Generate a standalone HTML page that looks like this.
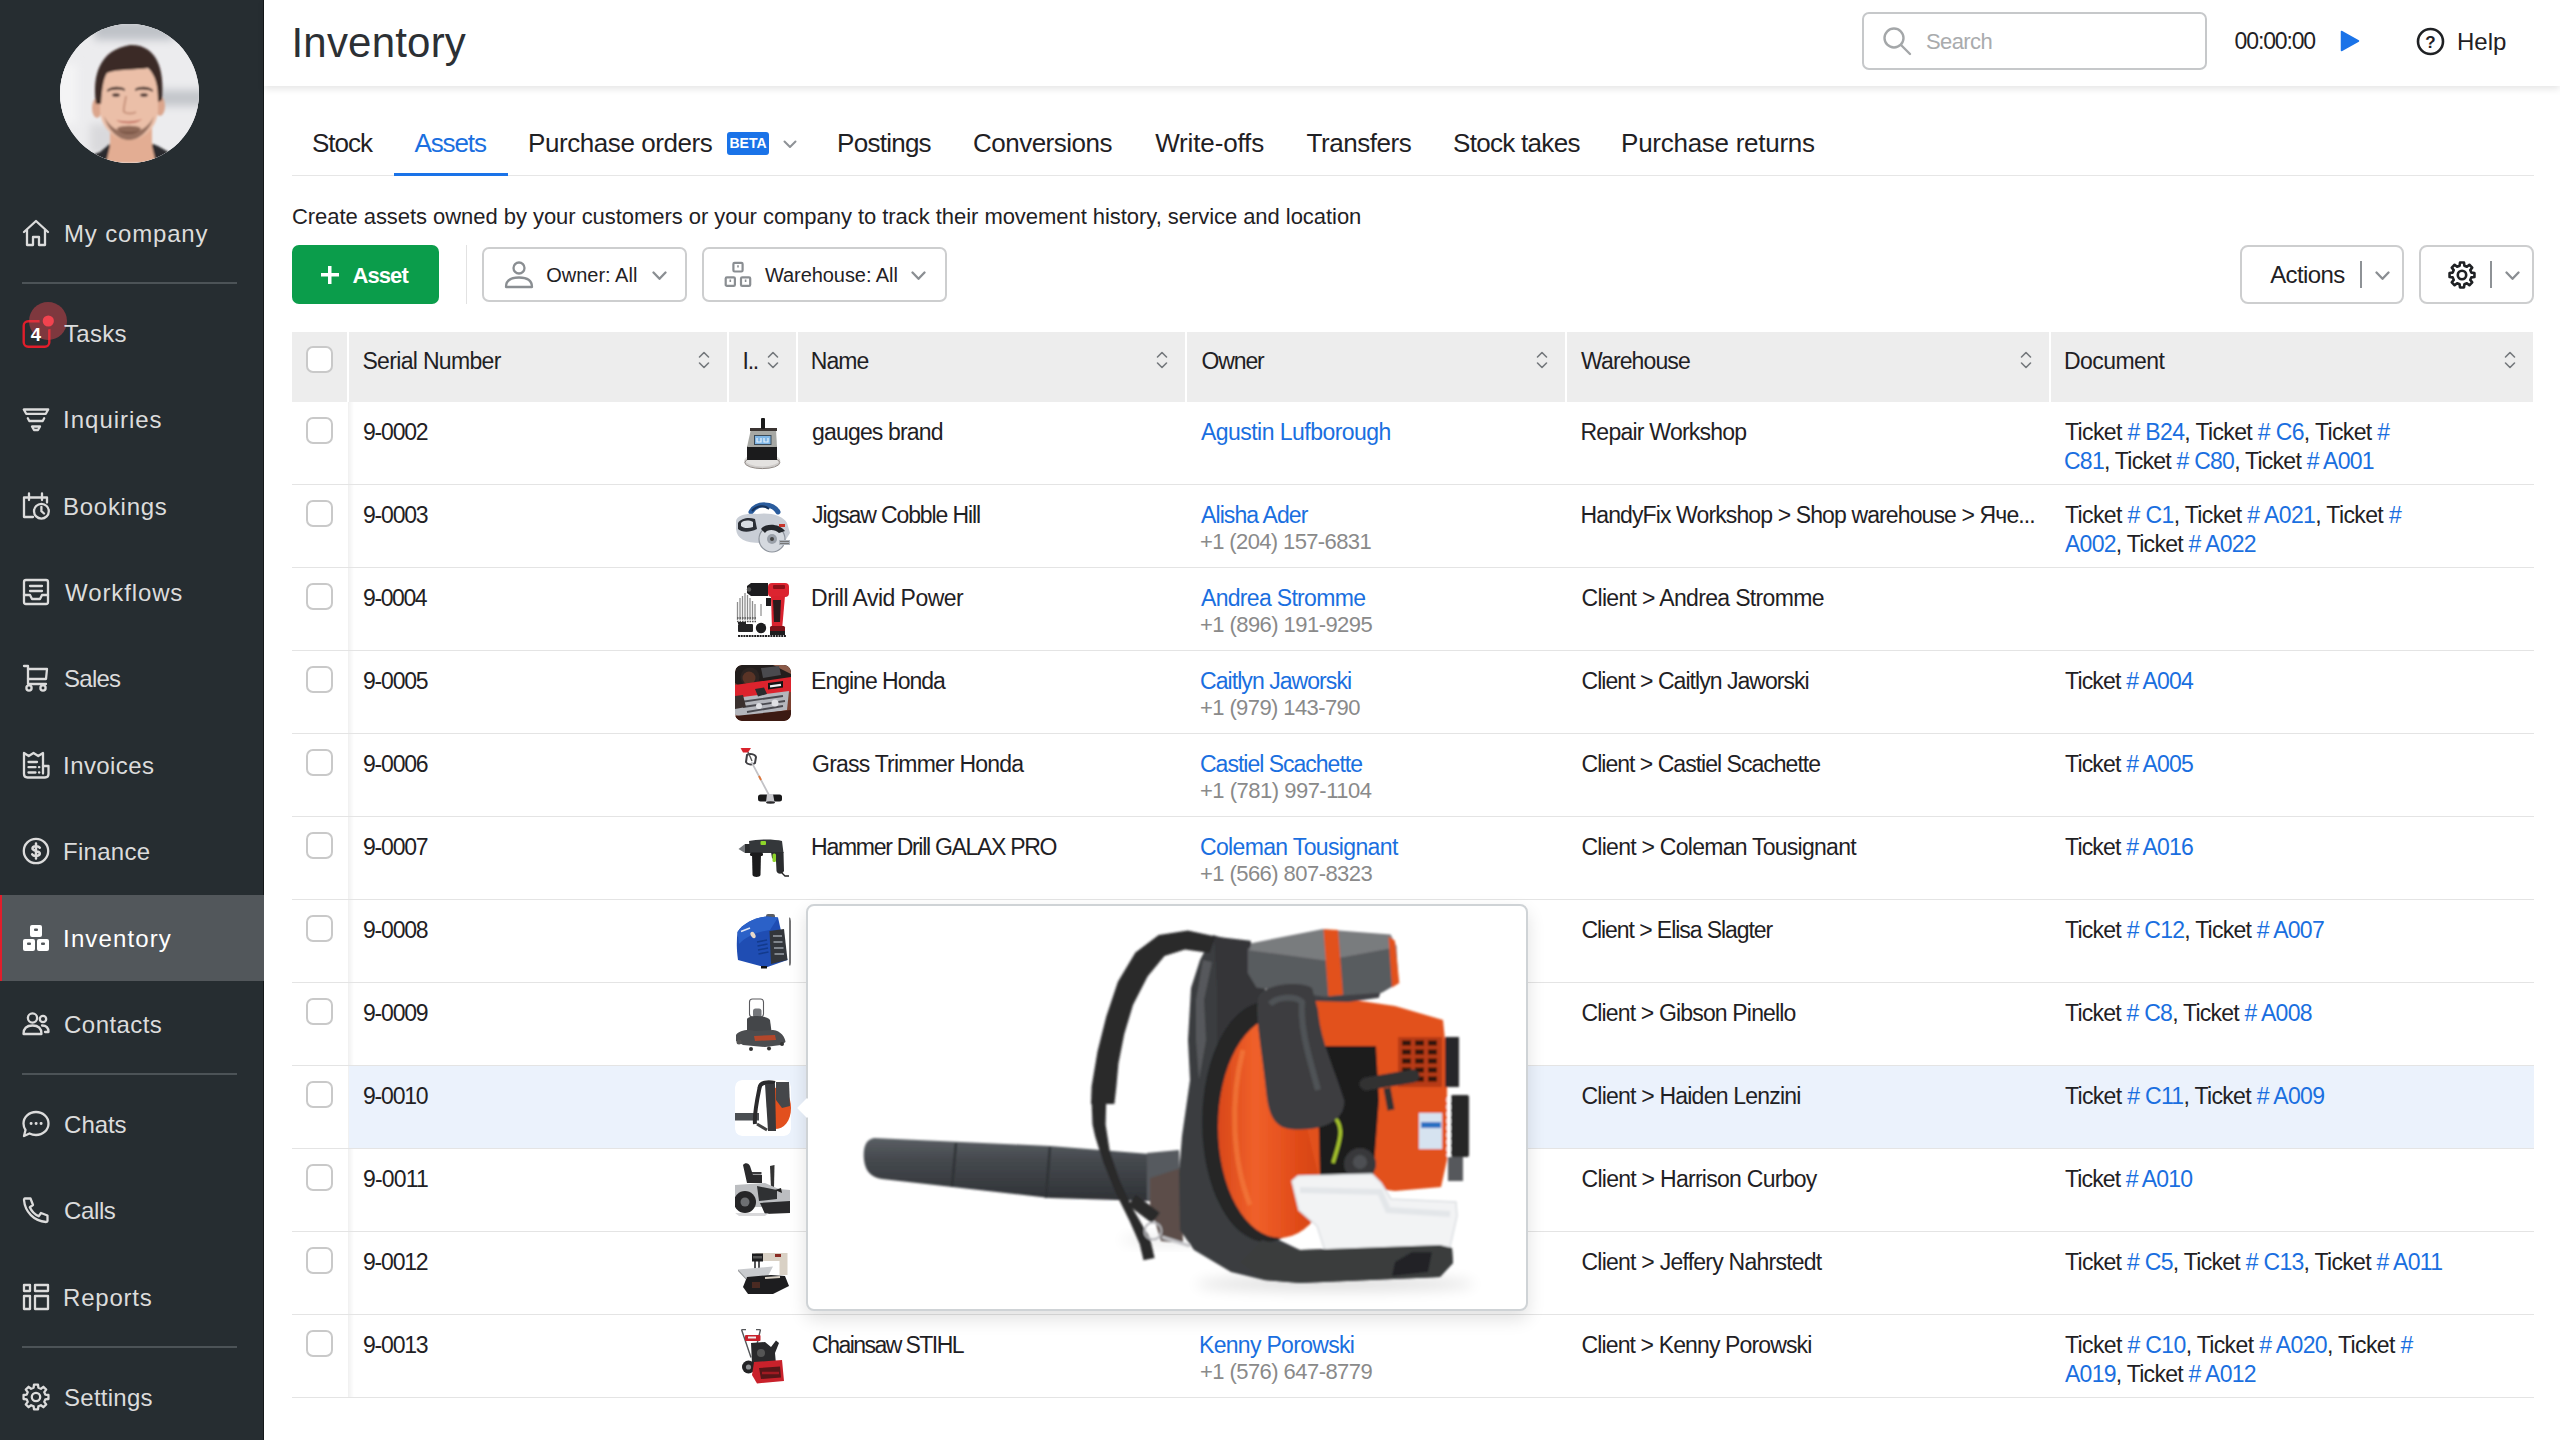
<!DOCTYPE html>
<html lang="en"><head><meta charset="utf-8"><title>Inventory - Assets</title>
<style>
*{box-sizing:border-box;margin:0;padding:0}
html,body{width:2560px;height:1440px;overflow:hidden;background:#fff}
body{font-family:"Liberation Sans",sans-serif;color:#1f2124;position:relative;font-size:22px}
a{color:#1a6fe0;text-decoration:none}
svg{display:block}
/* sidebar */
.side{position:absolute;left:0;top:0;width:264px;height:1440px;background:#262d31;box-shadow:inset -1px 0 0 #14181a}
.avatar{position:absolute;left:60px;top:24px;width:139px;height:139px;border-radius:50%;overflow:hidden;background:#e9e9eb}
.active-bg{position:absolute;left:0;top:895px;width:264px;height:86px;background:#52575b;border-left:2px solid #e01e2b}
.sdiv{position:absolute;left:22px;width:215px;height:2px;background:#4c5357}
.mi{position:absolute;left:0;width:264px;height:44px;color:#dcdcdc;font-size:24px;line-height:44px}
.mi.act{color:#fff}
.mic{position:absolute;left:22px;top:8px;width:28px;height:28px}
.mt{position:absolute;left:64px;top:1px;white-space:nowrap}
/* header */
.hdr{position:absolute;left:264px;top:0;width:2296px;height:86px;background:#fff;box-shadow:0 3px 7px rgba(0,0,0,.10)}
.title{position:absolute;left:29px;top:15px;font-size:42px;line-height:56px;color:#2c3034;white-space:nowrap;font-weight:400}
.search{position:absolute;left:1598px;top:12px;width:345px;height:58px;border:2px solid #c6c8ca;border-radius:7px}
.search svg{position:absolute;left:18px;top:12px}
.search span{position:absolute;left:63px;top:13px;font-size:22px;line-height:30px;color:#a9abad}
.timer{position:absolute;left:1970px;top:26px;font-size:23px;line-height:30px;white-space:nowrap}
.play{position:absolute;left:2076px;top:30px}
.helpic{position:absolute;left:2152px;top:27px}
.help{position:absolute;left:2194px;top:26px;font-size:24px;line-height:32px}
/* tabs */
.tabline{position:absolute;left:292px;top:175px;width:2242px;height:1px;background:#e6e6e6}
.tabul{position:absolute;left:394px;top:173px;width:114px;height:3px;background:#1a73e8}
.tab{position:absolute;top:126px;font-size:26px;line-height:34px;white-space:nowrap;color:#1f2124}
.tab.on{color:#1a6fe0}
.beta{position:absolute;left:727px;top:132px;width:42px;height:23px;background:#1a73e8;border-radius:3px;color:#fff;font-size:14px;font-weight:bold;line-height:23px;text-align:center}
.tabchev{position:absolute;left:783px;top:140px}
/* toolbar */
.desc{position:absolute;left:292px;top:203px;font-size:22px;line-height:28px;white-space:nowrap}
.btn-asset{position:absolute;left:292px;top:245px;width:147px;height:59px;background:#0b9d4b;border-radius:7px;color:#fff;font-weight:bold;font-size:22px;line-height:61px}
.btn-asset .plus{position:absolute;left:29px;top:21px;width:18px;height:18px;background:linear-gradient(#fff,#fff) center/18px 3.5px no-repeat,linear-gradient(#fff,#fff) center/3.5px 18px no-repeat}
.btn-asset #t-asset{position:absolute;left:60px;top:0}
.vdiv{position:absolute;left:466px;top:245px;width:1px;height:59px;background:#e2e2e2}
.fbtn{position:absolute;top:247px;height:55px;border:2px solid #cdcecf;border-radius:7px;background:#fff}
.fbtn svg.ic{position:absolute;left:20px;top:11px}
.ft{position:absolute;top:11px;font-size:20px;line-height:30px;white-space:nowrap}
.fchev{position:absolute;top:22px}
.abtn{position:absolute;top:245px;height:59px;border:2px solid #cdcecf;border-radius:8px;background:#fff}
.at{position:absolute;left:28px;top:12px;font-size:24px;line-height:32px}
.asep{position:absolute;top:14px;width:2px;height:27px;background:#8e9296}
.achev{position:absolute;top:24px}
.gear{position:absolute;left:27px;top:14px}
/* table */
.thead{position:absolute;left:0;top:332px;height:70px;width:2560px}
.th{position:absolute;top:0;height:70px;background:#ededed}
.thl{position:absolute;left:14px;top:15px;font-size:23px;line-height:28px;white-space:nowrap}
.sort{position:absolute;right:17px;top:18.500px}
.cb{position:absolute;width:27px;height:27px;border:2px solid #c9c9c9;border-radius:7px;background:#fff}
.colshadow{position:absolute;left:348px;top:402px;width:6px;height:996px;background:linear-gradient(90deg,rgba(0,0,0,.06),rgba(0,0,0,0))}
.tr{position:absolute;left:292px;width:2242px;height:83px;border-bottom:1px solid #e4e4e4}
.tr.hl::before{content:"";position:absolute;left:57px;right:0;top:0;bottom:0;background:#ebf2fc}
.c{position:absolute;top:16px;font-size:23px;line-height:28px;white-space:nowrap}
.ph{top:43px;color:#8a8a8a;font-size:22px}
.doc{top:14px;line-height:29px}
.thumb{position:absolute;left:443px;top:14px;width:56px;height:56px;border-radius:7px;overflow:hidden}
/* popup */
.pop{position:absolute;left:806px;top:904px;width:722px;height:407px;background:#fff;border:2px solid #cfd3d6;border-radius:8px;box-shadow:0 8px 18px rgba(0,0,0,.12)}
.pop .arrow{position:absolute;left:-8px;top:195px;width:14px;height:14px;background:#fff;transform:rotate(45deg)}
.pop svg{position:absolute;left:0;top:0}

</style></head><body>
<div class="side"><div class="avatar"><svg width="139" height="139" viewBox="0 0 139 139"><defs><filter id="ab" x="-10%" y="-10%" width="120%" height="120%"><feGaussianBlur stdDeviation="4"/></filter><filter id="af" x="-5%" y="-5%" width="110%" height="110%"><feGaussianBlur stdDeviation=".8"/></filter></defs>
<rect width="139" height="139" fill="#ececee"/>
<g filter="url(#ab)"><rect x="34" y="-4" width="80" height="20" fill="#bfc2c8"/><rect x="96" y="66" width="50" height="16" fill="#c3c6cb"/><rect x="30" y="100" width="26" height="30" fill="#d9d9dc"/><rect x="-5" y="40" width="22" height="60" fill="#f4f4f5"/></g>
<g filter="url(#af)">
<path d="M12 139 L40 128 L52 118 H88 L98 122 L128 139 Z" fill="#2b2b2d"/>
<path d="M50 100 H92 V122 L96 139 H46 L50 122 Z" fill="#e3ad93"/>
<ellipse cx="37" cy="84" rx="5" ry="10" fill="#dba58c"/><ellipse cx="100" cy="82" rx="5" ry="10" fill="#dba58c"/>
<path d="M40 60 C40 34 96 32 98 60 L98 88 C96 104 84 116 69 116 C54 116 42 104 40 88 Z" fill="#ebbfa8"/>
<path d="M44 92 C48 106 58 116 69 116 C80 116 90 106 94 92 C88 104 80 108 69 108 C58 108 50 104 44 92 Z" fill="#7a5545" opacity=".75"/>
<path d="M57 104 C62 101 76 101 81 104 C78 112 60 112 57 104 Z" fill="#6b4638" opacity=".7"/>
<path d="M56 96 C62 98 76 98 82 95 C78 100 62 101 56 96 Z" fill="#c0695a"/>
<path d="M47 66 C52 62 60 62 65 65 L65 67 C60 65 52 65 47 68 Z" fill="#3b2a26"/><path d="M75 65 C80 62 88 62 93 66 L93 68 C88 65 80 65 75 67 Z" fill="#3b2a26"/>
<ellipse cx="56" cy="71" rx="4" ry="1.800" fill="#4a3630"/><ellipse cx="84" cy="71" rx="4" ry="1.800" fill="#4a3630"/>
<path d="M66 72 C65 80 63 84 64 88 C67 90 73 90 76 88" fill="none" stroke="#c8937c" stroke-width="2"/>
<path d="M36 80 C32 50 40 26 70 21 C96 20 105 44 102 76 L98 78 C98 62 96 52 88 44 C76 46 56 45 47 49 C43 56 42 66 41 80 Z" fill="#3a2925"/>
</g></svg></div><div class="active-bg"></div><div class="sdiv" style="top:282px"></div><div class="sdiv" style="top:1073px"></div><div class="sdiv" style="top:1346px"></div><div class="mi" style="top:211px"><span class="mic"><svg width="28" height="28" viewBox="0 0 28 28" fill="none" stroke="#dcdcdc" stroke-width="2.3" stroke-linecap="round" stroke-linejoin="round" ><path d="M2 13 L14 2 L26 13"/><path d="M5 11 V26 H11 V18 H17 V26 H23 V11"/></svg></span><span class="mt" id="m-home" style="letter-spacing:0.833px;margin-left:0.00px">My company</span></div><div class="mi" style="top:311px"><span class="mic"><svg width="60" height="60" viewBox="0 0 60 60" style="position:absolute;left:-16px;top:-15px;overflow:visible"><rect x="17.700" y="17.200" width="25.600" height="25.600" rx="4.500" fill="none" stroke="#e01e2b" stroke-width="2.400"/><circle cx="42" cy="17" r="8.500" fill="#262d31"/><circle cx="42" cy="17" r="19" fill="#e0454d" fill-opacity=".48"/><text x="30" y="36.500" font-family="Liberation Sans,sans-serif" font-size="18.500" font-weight="bold" fill="#fff" text-anchor="middle">4</text><circle cx="42.300" cy="17" r="5.600" fill="#f2434f"/></svg></span><span class="mt" id="m-tasks" style="letter-spacing:0.300px;margin-left:0.00px">Tasks</span></div><div class="mi" style="top:397px"><span class="mic"><svg width="28" height="28" viewBox="0 0 28 28" fill="none" stroke="#dcdcdc" stroke-width="2.3" stroke-linecap="round" stroke-linejoin="round" ><path d="M1.800 4.500 H26.200 L23.800 8.800 H4.200 Z"/><path d="M5.800 13.300 L7.300 16 H20.700 L22.200 13.300"/><path d="M10 21.500 H18 L16 25 H12 Z"/></svg></span><span class="mt" id="m-inquiries" style="letter-spacing:0.975px;margin-left:-0.90px">Inquiries</span></div><div class="mi" style="top:484px"><span class="mic"><svg width="28" height="28" viewBox="0 0 28 28" fill="none" stroke="#dcdcdc" stroke-width="2.3" stroke-linecap="round" stroke-linejoin="round" ><path d="M11 25 H2 V5.500 H25 V10.500"/><path d="M7 1.500 V8 M20 1.500 V8"/><circle cx="19.400" cy="19.200" r="7.400"/><path d="M19.400 15 V19.200 L22 21.500"/></svg></span><span class="mt" id="m-bookings" style="letter-spacing:0.698px;margin-left:-0.90px">Bookings</span></div><div class="mi" style="top:570px"><span class="mic"><svg width="28" height="28" viewBox="0 0 28 28" fill="none" stroke="#dcdcdc" stroke-width="2.3" stroke-linecap="round" stroke-linejoin="round" ><rect x="2" y="2" width="24" height="24" rx="2"/><path d="M8 8 H20 M8 13 H20"/><path d="M2 17 H8 L10 21 H18 L20 17 H26"/></svg></span><span class="mt" id="m-workflows" style="letter-spacing:0.879px;margin-left:1.10px">Workflows</span></div><div class="mi" style="top:656px"><span class="mic"><svg width="28" height="28" viewBox="0 0 28 28" fill="none" stroke="#dcdcdc" stroke-width="2.3" stroke-linecap="round" stroke-linejoin="round" ><path d="M2 2 H6 V20 H24"/><path d="M6 5 H25 L24 15 H6"/><circle cx="7" cy="24" r="2.6"/><circle cx="21" cy="24" r="2.6"/></svg></span><span class="mt" id="m-sales" style="letter-spacing:-0.775px;margin-left:0.10px">Sales</span></div><div class="mi" style="top:743px"><span class="mic"><svg width="28" height="28" viewBox="0 0 28 28" fill="none" stroke="#dcdcdc" stroke-width="2.3" stroke-linecap="round" stroke-linejoin="round" ><path d="M2 2 L6.750 5 L11.500 2 L16.250 5 L21 2 V15 H26.500 V23 Q26.500 26.500 23 26.500 H5.500 Q2 26.500 2 23 Z"/><path d="M21 15 V22.500"/><path d="M6.500 11 H15 M6.500 16.200 H13.500 M6.500 21.500 H13.500 M17 16.200 h.3 M17 21.500 h.3"/></svg></span><span class="mt" id="m-invoices" style="letter-spacing:0.413px;margin-left:-0.90px">Invoices</span></div><div class="mi" style="top:829px"><span class="mic"><svg width="28" height="28" viewBox="0 0 28 28" fill="none" stroke="#dcdcdc" stroke-width="2.3" stroke-linecap="round" stroke-linejoin="round" ><circle cx="14" cy="14" r="12.200"/><path d="M17.800 10.800 C16.500 8.800 10.500 8.600 10.500 11.600 C10.500 14.600 17.800 13.400 17.800 16.600 C17.800 19.600 11.500 19.600 10.200 17.400 M14 6.500 V21.500" stroke-width="2.500"/></svg></span><span class="mt" id="m-finance" style="letter-spacing:0.251px;margin-left:-0.90px">Finance</span></div><div class="mi act" style="top:916px"><span class="mic"><svg width="28" height="28" viewBox="0 0 28 28"><rect x="8" y="1" width="12" height="12" rx="2" fill="#fff"/><rect x="1" y="15" width="12" height="12" rx="2" fill="#fff"/><rect x="15" y="15" width="12" height="12" rx="2" fill="#fff"/><rect x="12" y="4.5" width="4" height="2.6" rx="1" fill="#52575b"/><rect x="5" y="18.5" width="4" height="2.6" rx="1" fill="#52575b"/><rect x="19" y="18.5" width="4" height="2.6" rx="1" fill="#52575b"/></svg></span><span class="mt" id="m-inventory" style="letter-spacing:1.121px;margin-left:-0.90px">Inventory</span></div><div class="mi" style="top:1002px"><span class="mic"><svg width="28" height="28" viewBox="0 0 28 28" fill="none" stroke="#dcdcdc" stroke-width="2.3" stroke-linecap="round" stroke-linejoin="round" ><circle cx="10.5" cy="8" r="4.6"/><path d="M1.5 24 C1.5 17 6 15.5 10.5 15.5 C15 15.5 19.5 17 19.5 24 Z"/><circle cx="21" cy="9" r="3.2"/><path d="M20 15.5 C24 15.5 26.5 17 26.5 22 H23"/></svg></span><span class="mt" id="m-contacts" style="letter-spacing:0.428px;margin-left:0.10px">Contacts</span></div><div class="mi" style="top:1102px"><span class="mic"><svg width="28" height="28" viewBox="0 0 28 28" fill="none" stroke="#dcdcdc" stroke-width="2.3" stroke-linecap="round" stroke-linejoin="round" ><path d="M14 2 C21 2 26.5 7 26.5 13.5 C26.5 20 21 25 14 25 C11.5 25 9.5 24.5 7.5 23.5 L2 26 L3.5 20 C2.2 18 1.5 16 1.5 13.5 C1.5 7 7 2 14 2 Z"/><path d="M9 13.5 h.2 M14 13.5 h.2 M19 13.5 h.2" stroke-width="2.8"/></svg></span><span class="mt" id="m-chats" style="letter-spacing:-0.050px;margin-left:0.10px">Chats</span></div><div class="mi" style="top:1188px"><span class="mic"><svg width="28" height="28" viewBox="0 0 28 28" fill="none" stroke="#dcdcdc" stroke-width="2.3" stroke-linecap="round" stroke-linejoin="round" ><path d="M3 2.5 H8.5 L11 9 L7.8 11.2 C9.5 15 13 18.5 16.8 20.2 L19 17 L25.5 19.5 V25 C25.5 25.8 24.8 26 24 26 C12 25 3 16 2 4 C2 3.2 2.2 2.5 3 2.5 Z"/></svg></span><span class="mt" id="m-calls" style="letter-spacing:-0.400px;margin-left:0.10px">Calls</span></div><div class="mi" style="top:1275px"><span class="mic"><svg width="28" height="28" viewBox="0 0 28 28" fill="none" stroke="#dcdcdc" stroke-width="2.3" stroke-linecap="round" stroke-linejoin="round" stroke-linejoin="miter"><rect x="2" y="2" width="6" height="6"/><rect x="13" y="2" width="13" height="6"/><rect x="2" y="13" width="6" height="13"/><rect x="13" y="13" width="13" height="13"/></svg></span><span class="mt" id="m-reports" style="letter-spacing:0.751px;margin-left:-0.90px">Reports</span></div><div class="mi" style="top:1375px"><span class="mic"><svg width="28" height="28" viewBox="0 0 28 28" fill="none" stroke="#dcdcdc" stroke-width="2.3" stroke-linejoin="round"><path d="M11.62 4.70 L11.99 1.56 L16.01 1.56 L16.38 4.70 L18.90 5.74 L21.38 3.78 L24.22 6.62 L22.26 9.10 L23.30 11.62 L26.44 11.99 L26.44 16.01 L23.30 16.38 L22.26 18.90 L24.22 21.38 L21.38 24.22 L18.90 22.26 L16.38 23.30 L16.01 26.44 L11.99 26.44 L11.62 23.30 L9.10 22.26 L6.62 24.22 L3.78 21.38 L5.74 18.90 L4.70 16.38 L1.56 16.01 L1.56 11.99 L4.70 11.62 L5.74 9.10 L3.78 6.62 L6.62 3.78 L9.10 5.74 Z"/><circle cx="14" cy="14" r="4.2"/></svg></span><span class="mt" id="m-settings" style="letter-spacing:0.238px;margin-left:0.10px">Settings</span></div></div>

<div class="hdr">
<div class="title" id="t-title" style="letter-spacing:0.196px;margin-left:-1.50px">Inventory</div>
<div class="search"><svg width="30" height="30" viewBox="0 0 30 30" fill="none" stroke="#a4a7a9" stroke-width="2.4" stroke-linecap="round"><circle cx="12" cy="12" r="9.5"/><path d="M19 19 L28 28"/></svg><span id="t-search" style="letter-spacing:-0.600px;margin-left:-1.00px">Search</span></div>
<div class="timer" id="t-timer" style="letter-spacing:-1.142px;margin-left:0.60px">00:00:00</div>
<div class="play"><svg width="20" height="22" viewBox="0 0 20 22"><path d="M1.5 1.5 L18.5 11 L1.5 20.5 Z" fill="#1a73e8" stroke="#1a73e8" stroke-width="1.5" stroke-linejoin="round"/></svg></div>
<div class="helpic"><svg width="29" height="29" viewBox="0 0 29 29"><circle cx="14.5" cy="14.5" r="12.5" fill="none" stroke="#1f2124" stroke-width="2.6"/><text x="14.5" y="20.5" font-family="Liberation Sans,sans-serif" font-size="17" font-weight="bold" fill="#1f2124" text-anchor="middle">?</text></svg></div>
<div class="help" id="t-help" style="letter-spacing:0.035px;margin-left:-1.10px">Help</div>
</div>

<div class="tabline"></div><div class="tabul"></div><div class="tab" id="tab0" style="left:313px;letter-spacing:-1.000px;margin-left:-1.00px">Stock</div><div class="tab on" id="tab1" style="left:414.5px;letter-spacing:-1.100px;margin-left:-0.10px">Assets</div><div class="tab" id="tab2" style="left:529px;letter-spacing:-0.429px;margin-left:-1.00px">Purchase orders</div><div class="tab" id="tab3" style="left:838px;letter-spacing:-0.746px;margin-left:-0.90px">Postings</div><div class="tab" id="tab4" style="left:974px;letter-spacing:-0.510px;margin-left:-1.00px">Conversions</div><div class="tab" id="tab5" style="left:1154px;letter-spacing:-0.146px;margin-left:1.20px">Write-offs</div><div class="tab" id="tab6" style="left:1306px;letter-spacing:-0.450px;margin-left:0.50px">Transfers</div><div class="tab" id="tab7" style="left:1454px;letter-spacing:-0.700px;margin-left:-1.00px">Stock takes</div><div class="tab" id="tab8" style="left:1622px;letter-spacing:-0.272px;margin-left:-0.90px">Purchase returns</div><div class="beta"><span>BETA</span></div><div class="tabchev"><svg width="14" height="9" viewBox="0 0 14 9" fill="none" stroke="#8e9296" stroke-width="2" stroke-linecap="round" stroke-linejoin="round"><path d="M1.5 1.5 L7 7 L12.5 1.5"/></svg></div>

<div class="desc" id="t-desc" style="letter-spacing:-0.047px;margin-left:-0.10px">Create assets owned by your customers or your company to track their movement history, service and location</div>
<div class="btn-asset"><span class="plus"></span><span id="t-asset" style="letter-spacing:-0.925px;margin-left:0.50px">Asset</span></div>
<div class="vdiv"></div>
<div class="fbtn" style="left:482px;width:205px"><svg class="ic" width="30" height="30" viewBox="0 0 30 30" fill="none" stroke="#8a8e92" stroke-width="2.3" stroke-linejoin="round"><circle cx="15" cy="8" r="5.5"/><path d="M2 27 C2 20 8 17.5 15 17.5 C22 17.5 28 20 28 27 Z"/></svg><span class="ft" id="t-owner" style="left:62px;letter-spacing:0.000px;margin-left:0.20px">Owner: All</span><span class="fchev" style="left:168px"><svg width="15" height="10" viewBox="0 0 15 10" fill="none" stroke="#8a8e92" stroke-width="2.300" stroke-linecap="round" stroke-linejoin="round"><path d="M1.500 1.500 L7.500 7.800 L13.500 1.500"/></svg></span></div>
<div class="fbtn" style="left:702px;width:245px"><svg class="ic" width="30" height="30" viewBox="0 0 30 30" fill="none" stroke="#8a8e92" stroke-width="2.200" stroke-linejoin="round"><rect x="9.400" y="2.900" width="9.200" height="8.600" rx="1.200"/><rect x="1.700" y="17.300" width="9.200" height="8.600" rx="1.200"/><rect x="17" y="17.300" width="9.200" height="8.600" rx="1.200"/><path d="M13.200 6.400 h1.600 M5.500 20.800 h1.600 M20.800 20.800 h1.600" stroke-width="2.400"/></svg><span class="ft" id="t-wh" style="left:61px;letter-spacing:-0.071px;margin-left:0.00px">Warehouse: All</span><span class="fchev" style="left:207px"><svg width="15" height="10" viewBox="0 0 15 10" fill="none" stroke="#8a8e92" stroke-width="2.300" stroke-linecap="round" stroke-linejoin="round"><path d="M1.500 1.500 L7.500 7.800 L13.500 1.500"/></svg></span></div>
<div class="abtn" style="left:2240px;width:164px"><span class="at" id="t-actions" style="letter-spacing:-0.619px;margin-left:0.20px">Actions</span><i class="asep" style="left:118px"></i><span class="achev" style="left:133px"><svg width="15" height="10" viewBox="0 0 15 10" fill="none" stroke="#8a8e92" stroke-width="2.300" stroke-linecap="round" stroke-linejoin="round"><path d="M1.500 1.500 L7.500 7.800 L13.500 1.500"/></svg></span></div>
<div class="abtn" style="left:2419px;width:115px"><span class="gear"><svg width="28" height="28" viewBox="0 0 28 28" fill="none" stroke="#1f2124" stroke-width="2.6" stroke-linejoin="round"><path d="M11.62 4.70 L11.99 1.56 L16.01 1.56 L16.38 4.70 L18.90 5.74 L21.38 3.78 L24.22 6.62 L22.26 9.10 L23.30 11.62 L26.44 11.99 L26.44 16.01 L23.30 16.38 L22.26 18.90 L24.22 21.38 L21.38 24.22 L18.90 22.26 L16.38 23.30 L16.01 26.44 L11.99 26.44 L11.62 23.30 L9.10 22.26 L6.62 24.22 L3.78 21.38 L5.74 18.90 L4.70 16.38 L1.56 16.01 L1.56 11.99 L4.70 11.62 L5.74 9.10 L3.78 6.62 L6.62 3.78 L9.10 5.74 Z"/><circle cx="14" cy="14" r="4.2"/></svg></span><i class="asep" style="left:69px"></i><span class="achev" style="left:84px"><svg width="15" height="10" viewBox="0 0 15 10" fill="none" stroke="#8a8e92" stroke-width="2.300" stroke-linecap="round" stroke-linejoin="round"><path d="M1.500 1.500 L7.500 7.800 L13.500 1.500"/></svg></span></div>

<div class="thead"><div class="th" style="left:292px;width:55px"><i class="cb" style="left:14px;top:14px"></i></div><div class="th" style="left:349px;width:378px"><span class="thl" id="th1" style="letter-spacing:-0.667px;margin-left:-0.60px">Serial Number</span><span class="sort"><svg width="12" height="18" viewBox="0 0 12 18" fill="none" stroke="#74787c" stroke-width="1.600" stroke-linecap="round" stroke-linejoin="round"><path d="M1.500 6 L6 1.500 L10.500 6"/><path d="M1.500 12 L6 16.500 L10.500 12"/></svg></span></div><div class="th" style="left:729px;width:67px"><span class="thl" id="th2" style="letter-spacing:-1.300px;margin-left:-0.40px">I..</span><span class="sort"><svg width="12" height="18" viewBox="0 0 12 18" fill="none" stroke="#74787c" stroke-width="1.600" stroke-linecap="round" stroke-linejoin="round"><path d="M1.500 6 L6 1.500 L10.500 6"/><path d="M1.500 12 L6 16.500 L10.500 12"/></svg></span></div><div class="th" style="left:798px;width:387px"><span class="thl" id="th3" style="letter-spacing:-0.964px;margin-left:-1.20px">Name</span><span class="sort"><svg width="12" height="18" viewBox="0 0 12 18" fill="none" stroke="#74787c" stroke-width="1.600" stroke-linecap="round" stroke-linejoin="round"><path d="M1.500 6 L6 1.500 L10.500 6"/><path d="M1.500 12 L6 16.500 L10.500 12"/></svg></span></div><div class="th" style="left:1187px;width:378px"><span class="thl" id="th4" style="letter-spacing:-1.125px;margin-left:0.50px">Owner</span><span class="sort"><svg width="12" height="18" viewBox="0 0 12 18" fill="none" stroke="#74787c" stroke-width="1.600" stroke-linecap="round" stroke-linejoin="round"><path d="M1.500 6 L6 1.500 L10.500 6"/><path d="M1.500 12 L6 16.500 L10.500 12"/></svg></span></div><div class="th" style="left:1567px;width:482px"><span class="thl" id="th5" style="letter-spacing:-0.875px;margin-left:0.00px">Warehouse</span><span class="sort"><svg width="12" height="18" viewBox="0 0 12 18" fill="none" stroke="#74787c" stroke-width="1.600" stroke-linecap="round" stroke-linejoin="round"><path d="M1.500 6 L6 1.500 L10.500 6"/><path d="M1.500 12 L6 16.500 L10.500 12"/></svg></span></div><div class="th" style="left:2051px;width:482px"><span class="thl" id="th6" style="letter-spacing:-0.572px;margin-left:-1.00px">Document</span><span class="sort"><svg width="12" height="18" viewBox="0 0 12 18" fill="none" stroke="#74787c" stroke-width="1.600" stroke-linecap="round" stroke-linejoin="round"><path d="M1.500 6 L6 1.500 L10.500 6"/><path d="M1.500 12 L6 16.500 L10.500 12"/></svg></span></div></div>
<div class="colshadow"></div>
<div class="tr" style="top:402px"><i class="cb" style="left:14px;top:15px"></i><span class="c sn" id="sn0" style="left:71px;letter-spacing:-1.200px;margin-left:0.00px">9-0002</span><span class="thumb"><svg width="56" height="56" viewBox="0 0 56 56" ><ellipse cx="27.3" cy="45" rx="18" ry="7.5" fill="#cfccca"/><ellipse cx="27.3" cy="44" rx="17" ry="6.5" fill="#e4e2e0"/><ellipse cx="27.3" cy="46.6" rx="17.5" ry="6" fill="none" stroke="#8f8884" stroke-width="1"/>
<rect x="12" y="30" width="30" height="14" fill="#1b1b1c"/><path d="M16 13 H41 L42 31 H12 Z" fill="#a7a8a4"/><rect x="15" y="12" width="27" height="3" fill="#3a3432"/>
<rect x="19.5" y="19.5" width="16.5" height="9" fill="#7fb6e6" stroke="#3b4a58" stroke-width="1"/><path d="M22 22 v4 h4 v-4 M29 22 v4 h4 v-4" stroke="#e8f2fb" stroke-width="1.2" fill="none"/>
<rect x="26" y="2" width="4" height="11" rx="1" fill="#1a1a1a"/></svg></span><span class="c nm" id="nm0" style="left:520px;letter-spacing:-0.841px;margin-left:0.10px">gauges brand</span><a class="c ow" id="ow0" style="left:909px;letter-spacing:-0.540px;margin-left:0.00px">Agustin Lufborough</a><span class="c wh" id="wh0" style="left:1289px;letter-spacing:-0.757px;margin-left:-0.50px">Repair Workshop</span><span class="c doc" id="doc0a" style="left:1773px;top:16px;letter-spacing:-0.639px;margin-left:0.00px">Ticket <a># B24</a>, Ticket <a># C6</a>, Ticket <a>#</a></span><span class="c doc" id="doc0b" style="left:1773px;top:45px;letter-spacing:-0.746px;margin-left:-1.00px"><a>C81</a>, Ticket <a># C80</a>, Ticket <a># A001</a></span></div>
<div class="tr" style="top:485px"><i class="cb" style="left:14px;top:15px"></i><span class="c sn" id="sn1" style="left:71px;letter-spacing:-1.200px;margin-left:0.00px">9-0003</span><span class="thumb"><svg width="56" height="56" viewBox="0 0 56 56" ><path d="M16 13 C22 3 38 4 43 13" fill="none" stroke="#2a5c9d" stroke-width="5" stroke-linecap="round"/><path d="M17 12 C22 6 30 6 34 10" fill="none" stroke="#16335c" stroke-width="2"/>
<path d="M1 22 C2 16 12 14 22 15 C34 13 48 16 52 24 L55 34 L50 42 L26 44 C10 44 2 40 1 30 Z" fill="#c9ced6"/><path d="M3 24 C6 19 14 18 20 20 L22 30 C14 34 6 33 3 30 Z" fill="#2b2f36"/><path d="M6 24 C9 21 14 21 18 23 L18 28 C13 30 8 29 6 27 Z" fill="#d9dde3"/>
<circle cx="37" cy="40" r="13" fill="#d5d9df" stroke="#8d939c" stroke-width="1.2"/><circle cx="37" cy="40" r="5" fill="#9aa0a9"/><circle cx="37" cy="40" r="2" fill="#444"/>
<path d="M26 30 C30 24 44 24 50 32 L44 34 C40 30 32 30 30 34 Z" fill="#23262b"/><rect x="44" y="25" width="6" height="3" fill="#c8362c"/><rect x="44" y="41" width="11" height="5" fill="#aeb4bc"/><path d="M45 42.5 h9 M45 44.5 h9" stroke="#666" stroke-width=".8"/></svg></span><span class="c nm" id="nm1" style="left:520px;letter-spacing:-1.117px;margin-left:0.10px">Jigsaw Cobble Hill</span><a class="c ow" id="ow1" style="left:909px;letter-spacing:-0.900px;margin-left:0.00px">Alisha Ader</a><span class="c ph" id="ph1" style="left:909px;letter-spacing:-0.625px;margin-left:-1.00px">+1 (204) 157-6831</span><span class="c wh" id="wh1" style="left:1289px;letter-spacing:-0.881px;margin-left:-0.50px">HandyFix Workshop &gt; Shop warehouse &gt; Яче...</span><span class="c doc" id="doc1a" style="left:1773px;top:16px;letter-spacing:-0.620px;margin-left:0.00px">Ticket <a># C1</a>, Ticket <a># A021</a>, Ticket <a>#</a></span><span class="c doc" id="doc1b" style="left:1773px;top:45px;letter-spacing:-0.722px;margin-left:0.00px"><a>A002</a>, Ticket <a># A022</a></span></div>
<div class="tr" style="top:568px"><i class="cb" style="left:14px;top:15px"></i><span class="c sn" id="sn2" style="left:71px;letter-spacing:-1.400px;margin-left:0.00px">9-0004</span><span class="thumb"><svg width="56" height="56" viewBox="0 0 56 56" ><g stroke="#8f8f8f" stroke-width="1.3"><path d="M2.5 20 V38 M5 16 V38 M7.500 14 V38 M10 11 V38 M12.5 13 V38 M15 16 V38 M17.5 19 V38 M20 22 V38"/></g><path d="M2 36 H21 M2 39.5 H21" stroke="#555" stroke-width="1.6" stroke-dasharray="1.6 .9"/>
<path d="M26 22 V34" stroke="#777" stroke-width="1"/>
<path d="M12 4 L16 1 H33 V14 H16 L12 11 Z" fill="#1d1d1f"/><circle cx="14" cy="7.500" r="2.2" fill="#555"/><rect x="33" y="1" width="21" height="14" rx="4" fill="#dc2430"/><rect x="38" y="3" width="12" height="4" rx="1" fill="#8c1018"/>
<path d="M36 14 H50 L47 48 H37 Z" fill="#d9222e"/><path d="M38 18 H46 L45 40 H39 Z" fill="#2a1a1c"/><rect x="31" y="16" width="5" height="8" fill="#1d1d1f"/><rect x="35" y="44" width="15" height="9" rx="1.5" fill="#7c1118"/><rect x="35" y="49" width="15" height="4" fill="#1d1d1f"/>
<rect x="3" y="42" width="15" height="8" rx="1" fill="#232325"/><path d="M3 41 h8" stroke="#232325" stroke-width="2"/><circle cx="26" cy="46" r="5.2" fill="#1d1d1f"/><path d="M3 54 H51" stroke="#1d1d1f" stroke-width="2" stroke-dasharray="2 .7"/></svg></span><span class="c nm" id="nm2" style="left:520px;letter-spacing:-0.539px;margin-left:-0.90px">Drill Avid Power</span><a class="c ow" id="ow2" style="left:909px;letter-spacing:-0.687px;margin-left:0.00px">Andrea Stromme</a><span class="c ph" id="ph2" style="left:909px;letter-spacing:-0.562px;margin-left:-1.00px">+1 (896) 191-9295</span><span class="c wh" id="wh2" style="left:1289px;letter-spacing:-0.663px;margin-left:0.50px">Client &gt; Andrea Stromme</span></div>
<div class="tr" style="top:651px"><i class="cb" style="left:14px;top:15px"></i><span class="c sn" id="sn3" style="left:71px;letter-spacing:-1.200px;margin-left:0.00px">9-0005</span><span class="thumb"><svg width="56" height="56" viewBox="0 0 56 56" style="border-radius:7px"><rect width="56" height="56" fill="#7a4030"/><path d="M0 0 H56 V13 L34 17 L6 22 L0 18 Z" fill="#221d1c"/><path d="M38 0 H56 V9 Z" fill="#8a5a48"/><circle cx="15" cy="12" r="9.500" fill="#2c2422"/><circle cx="14" cy="13" r="6.500" fill="#5a3426"/><path d="M26 3 L44 1 L46 10 L28 13 Z" fill="#4a4a4e"/>
<path d="M0 20 L56 12 V27 L0 35 Z" fill="#dc232d"/><path d="M33 18 L48 16 V22.500 L33 24.500 Z" fill="#141414"/><path d="M35 21.300 L46 19.800" stroke="#f2f2f2" stroke-width="2.200"/>
<path d="M0 33 L54 26 L52 45 L8 52 L0 50 Z" fill="#b4b6bc"/><path d="M6 37 L48 31 M8 42 L50 36 M12 47 L48 41" stroke="#4a4a50" stroke-width="1.800"/><path d="M0 31 L8 30 L11 42 L0 44 Z" fill="#3a302e"/><path d="M0 51 L56 45 V56 H0 Z" fill="#3c1a12"/><path d="M20 24 L29 22.500 L32 29 L23 31.500 Z" fill="#2a2a2c"/><circle cx="40" cy="38" r="3.500" fill="#dfe0e4"/><circle cx="24" cy="41" r="3" fill="#dfe0e4"/></svg></span><span class="c nm" id="nm3" style="left:520px;letter-spacing:-1.005px;margin-left:-0.90px">Engine Honda</span><a class="c ow" id="ow3" style="left:909px;letter-spacing:-0.939px;margin-left:-1.00px">Caitlyn Jaworski</a><span class="c ph" id="ph3" style="left:909px;letter-spacing:-0.600px;margin-left:-1.00px">+1 (979) 143-790</span><span class="c wh" id="wh3" style="left:1289px;letter-spacing:-0.957px;margin-left:0.50px">Client &gt; Caitlyn Jaworski</span><span class="c doc" id="doc3a" style="left:1773px;top:16px;letter-spacing:-0.813px;margin-left:0.00px">Ticket <a># A004</a></span></div>
<div class="tr" style="top:734px"><i class="cb" style="left:14px;top:15px"></i><span class="c sn" id="sn4" style="left:71px;letter-spacing:-1.200px;margin-left:0.00px">9-0006</span><span class="thumb"><svg width="56" height="56" viewBox="0 0 56 56" ><path d="M5.500 0 H16 L13 4.500 H8 Z" fill="#d9222c"/><path d="M12 7 C14 5 20 6 21 9 L20 15 C17 17.500 12 16.500 11 14 Z" fill="none" stroke="#3e3e42" stroke-width="2"/><path d="M13 4 L17 13" stroke="#555" stroke-width="1.4"/>
<path d="M16.500 14 L34.500 48" stroke="#c2c2c6" stroke-width="1.700"/><path d="M24 28 L26 32" stroke="#e0763a" stroke-width="1.800"/>
<rect x="23" y="46.500" width="24" height="7" rx="2.500" fill="#19191a"/><path d="M32 46 L38 46 L39.500 54 H31 Z" fill="#c9c9cd"/><ellipse cx="35.500" cy="54.500" rx="4.500" ry="1.200" fill="#2a2a2c"/></svg></span><span class="c nm" id="nm4" style="left:520px;letter-spacing:-0.786px;margin-left:0.10px">Grass Trimmer Honda</span><a class="c ow" id="ow4" style="left:909px;letter-spacing:-1.000px;margin-left:-1.00px">Castiel Scachette</a><span class="c ph" id="ph4" style="left:909px;letter-spacing:-0.500px;margin-left:-1.00px">+1 (781) 997-1104</span><span class="c wh" id="wh4" style="left:1289px;letter-spacing:-0.980px;margin-left:0.50px">Client &gt; Castiel Scachette</span><span class="c doc" id="doc4a" style="left:1773px;top:16px;letter-spacing:-0.814px;margin-left:0.00px">Ticket <a># A005</a></span></div>
<div class="tr" style="top:817px"><i class="cb" style="left:14px;top:15px"></i><span class="c sn" id="sn5" style="left:71px;letter-spacing:-1.200px;margin-left:0.00px">9-0007</span><span class="thumb"><svg width="56" height="56" viewBox="0 0 56 56" ><path d="M3.500 18 L10 13 H16 V22 H10 Z" fill="#75787c"/><path d="M10 13 h6 v9 h-6 Z" fill="#2b2d2f"/>
<path d="M14 10 C22 8 40 8 47 10 L48.500 22 H15 Z" fill="#34373a"/><rect x="25.500" y="10" width="5.500" height="4" rx="1" fill="#8fd52a"/>
<path d="M17 22 H26 L25.500 44 C25 46.500 18 46.500 17.500 44 Z" fill="#1b1b1c"/><rect x="15" y="21.500" width="13" height="3.500" rx="1.500" fill="#1b1b1c"/>
<path d="M36 21 H48.500 L49 40 C47 44 42 43 41.500 40 L41 30 L37 27 Z" fill="#2b2d2f"/><rect x="37.500" y="22.500" width="3.500" height="8.500" rx="1.500" fill="#8fd52a"/><path d="M46 41 L50 45 L54 45" stroke="#222" stroke-width="1.300" fill="none"/></svg></span><span class="c nm" id="nm5" style="left:520px;letter-spacing:-1.290px;margin-left:-0.90px">Hammer Drill GALAX PRO</span><a class="c ow" id="ow5" style="left:909px;letter-spacing:-0.647px;margin-left:-1.00px">Coleman Tousignant</a><span class="c ph" id="ph5" style="left:909px;letter-spacing:-0.562px;margin-left:-1.00px">+1 (566) 807-8323</span><span class="c wh" id="wh5" style="left:1289px;letter-spacing:-0.739px;margin-left:0.50px">Client &gt; Coleman Tousignant</span><span class="c doc" id="doc5a" style="left:1773px;top:16px;letter-spacing:-0.814px;margin-left:0.00px">Ticket <a># A016</a></span></div>
<div class="tr" style="top:900px"><i class="cb" style="left:14px;top:15px"></i><span class="c sn" id="sn6" style="left:71px;letter-spacing:-1.200px;margin-left:0.00px">9-0008</span><span class="thumb"><svg width="56" height="56" viewBox="0 0 56 56" ><rect x="31" y="0" width="9" height="5" rx="2" fill="#5b5e63"/><path d="M2.500 18 C8 9 22 3 32 2.500 L43 3.500 L52.500 46 L31 53.500 L3 46 C1.500 36 1.500 26 2.500 18 Z" fill="#1f4db3"/><path d="M2.500 18 C8 9 22 3 32 2.500 L43 3.500 L35 16 C22 18 12 22 4 30 Z" fill="#2b61c8"/>
<path d="M34.500 17 L49 15 L52.500 46 L36 50 Z" fill="#33363b"/><path d="M38 22 h9 M38.500 28 h9 M39 34 h9.500 M39.500 40 h9.500" stroke="#9aa0a8" stroke-width="1.600"/>
<path d="M22 28 l10 -2 M22.500 32 l10 -2 M23 36 l10 -2 M23.500 40 l10 -2" stroke="#123a8c" stroke-width="1.600"/><ellipse cx="18" cy="21" rx="2.200" ry="3.400" fill="#e8d9c8" transform="rotate(-30 18 21)"/><path d="M6 17.500 l9 -3.500" stroke="#dfe6f5" stroke-width="1.600"/>
<rect x="54.300" y="3.500" width="1.400" height="48" fill="#3a3a3c"/><rect x="26" y="52" width="6" height="2.500" fill="#111"/></svg></span><span class="c wh" id="wh6" style="left:1289px;letter-spacing:-1.072px;margin-left:0.50px">Client &gt; Elisa Slagter</span><span class="c doc" id="doc6a" style="left:1773px;top:16px;letter-spacing:-0.749px;margin-left:0.00px">Ticket <a># C12</a>, Ticket <a># A007</a></span></div>
<div class="tr" style="top:983px"><i class="cb" style="left:14px;top:15px"></i><span class="c sn" id="sn7" style="left:71px;letter-spacing:-1.200px;margin-left:0.00px">9-0009</span><span class="thumb"><svg width="56" height="56" viewBox="0 0 56 56" ><rect x="14.500" y="2" width="14" height="18" rx="3" fill="none" stroke="#5a5a5e" stroke-width="1.100"/><rect x="18" y="11.500" width="8.500" height="9" rx="2.500" fill="#75777b"/>
<path d="M12 22 C14 18 32 18 35 23 L37 38 H12 Z" fill="#444649"/><path d="M1 38 C4 33 14 32 20 34 L38 33 C46 34 50 40 50.500 45 L46 48 L30 50 L8 48 L1 44 Z" fill="#4b4d50"/><path d="M19 39 L40 38 L41 43 L20 44 Z" fill="#b3472b"/>
<circle cx="16" cy="52" r="2" fill="#333"/><circle cx="34" cy="51.500" r="2" fill="#333"/><circle cx="47" cy="47" r="2" fill="#333"/><circle cx="4" cy="45" r="2.500" fill="#555"/></svg></span><span class="c wh" id="wh7" style="left:1289px;letter-spacing:-0.838px;margin-left:0.50px">Client &gt; Gibson Pinello</span><span class="c doc" id="doc7a" style="left:1773px;top:16px;letter-spacing:-0.756px;margin-left:0.00px">Ticket <a># C8</a>, Ticket <a># A008</a></span></div>
<div class="tr hl" style="top:1066px"><i class="cb" style="left:14px;top:15px"></i><span class="c sn" id="sn8" style="left:71px;letter-spacing:-1.200px;margin-left:0.00px">9-0010</span><span class="thumb"><svg width="56" height="56" viewBox="0 0 56 56" style="border-radius:7px"><rect width="56" height="56" fill="#fff"/><rect x="0" y="33" width="24" height="7.500" fill="#4a4e52"/><path d="M40 3 C33 1.500 25 2 24.500 8 C22 20 19 34 20 44" fill="none" stroke="#2a2a2c" stroke-width="4"/>
<path d="M36 8 C48 6 56 14 56 28 C56 42 48 50 38 49 Z" fill="#e2501e"/><path d="M41 2 H54 L55 26 L47 28 L41 20 Z" fill="#45474a"/><path d="M30 4 H40 L41 51 H33 Z" fill="#38393c"/><path d="M22 44 l10 6" stroke="#444" stroke-width="3"/></svg></span><span class="c wh" id="wh8" style="left:1289px;letter-spacing:-0.784px;margin-left:0.50px">Client &gt; Haiden Lenzini</span><span class="c doc" id="doc8a" style="left:1773px;top:16px;letter-spacing:-0.673px;margin-left:0.00px">Ticket <a># C11</a>, Ticket <a># A009</a></span></div>
<div class="tr" style="top:1149px"><i class="cb" style="left:14px;top:15px"></i><span class="c sn" id="sn9" style="left:71px;letter-spacing:-0.800px;margin-left:0.00px">9-0011</span><span class="thumb"><svg width="56" height="56" viewBox="0 0 56 56" ><path d="M8 2 C10 -1 14 0 15 3 L18 12 H27 V20 H12 Z" fill="#2a2a2c"/><rect x="17" y="9" width="9.500" height="2.500" fill="#3a3a3c"/><path d="M35 3 L39.500 2 L39 25 H36 Z" fill="#333"/>
<path d="M0 22 L30 20 L44 26 L55 27 V40 L30 44 H0 Z" fill="#bcbec1"/><path d="M22 23 L42 27 V36 L24 38 Z" fill="#2f3133"/><path d="M40 27 L46 25 L47 30 Z" fill="#222"/>
<circle cx="10" cy="39" r="11" fill="#252527"/><circle cx="10" cy="39" r="4.500" fill="#6d6f72"/><path d="M25 40 L55 38 V50 L30 51 Z" fill="#29292b"/><path d="M0 50 H34 L30 53 H4 Z" fill="#c8c8ca" opacity=".7"/></svg></span><span class="c wh" id="wh9" style="left:1289px;letter-spacing:-0.724px;margin-left:0.50px">Client &gt; Harrison Curboy</span><span class="c doc" id="doc9a" style="left:1773px;top:16px;letter-spacing:-0.882px;margin-left:0.00px">Ticket <a># A010</a></span></div>
<div class="tr" style="top:1232px"><i class="cb" style="left:14px;top:15px"></i><span class="c sn" id="sn10" style="left:71px;letter-spacing:-1.200px;margin-left:0.00px">9-0012</span><span class="thumb"><svg width="56" height="56" viewBox="0 0 56 56" ><path d="M20.500 7 H52.500 V29 H44.500 V15 H20.500 Z" fill="#d9d1c5"/><rect x="40" y="8" width="6" height="3" fill="#8a2a22"/><rect x="17" y="7.500" width="11" height="8" fill="#1d1d1f"/><path d="M20 15 V24 M24 15 V24" stroke="#1d1d1f" stroke-width="1.500"/><rect x="18" y="10" width="9" height="2.500" fill="#555"/>
<path d="M3 23.500 L38 20.500 L33 30 L11 32 Z" fill="#c9cbce"/><path d="M3 23.500 L11 32 L11 33.500 L3 25 Z" fill="#8e9093"/>
<path d="M12 31 L36 29 L50 30 L54 40 L38 48 H13 L8 41 Z" fill="#1d1d1f"/><path d="M17 36 h8 v6 h-8 Z" fill="#4a2a22"/><path d="M30 32 L45 31" stroke="#d9d1c5" stroke-width="2"/></svg></span><span class="c wh" id="wh10" style="left:1289px;letter-spacing:-0.760px;margin-left:0.50px">Client &gt; Jeffery Nahrstedt</span><span class="c doc" id="doc10a" style="left:1773px;top:16px;letter-spacing:-0.701px;margin-left:0.00px">Ticket <a># C5</a>, Ticket <a># C13</a>, Ticket <a># A011</a></span></div>
<div class="tr" style="top:1315px"><i class="cb" style="left:14px;top:15px"></i><span class="c sn" id="sn11" style="left:71px;letter-spacing:-1.200px;margin-left:0.00px">9-0013</span><span class="thumb"><svg width="56" height="56" viewBox="0 0 56 56" ><path d="M6.500 .5 L16 28.500 M25.500 .5 L20.500 21.500 M6.500 .5 H11 M21 .5 H25.500" stroke="#55575a" stroke-width="1.400" fill="none"/><rect x="10" y="6" width="15.500" height="6" rx="1" fill="#c9212b"/><rect x="13" y="7.500" width="8" height="2" fill="#eee"/>
<path d="M16 14 L30 13 L36 18 L41 11.500 L44 14 L40 24 L41 35 H17 Z" fill="#29292b"/><circle cx="26" cy="24" r="4" fill="#555"/>
<circle cx="13.500" cy="38" r="6.500" fill="#232325"/><circle cx="13.500" cy="38" r="2.600" fill="#8d8f92"/>
<path d="M19 33 L47 31 L49 52 L22 54.500 L17 46 Z" fill="#c9212b"/><path d="M24 39 L45 37.500 L46 48.500 L26 50 Z" fill="#571618"/><path d="M27 44 h17" stroke="#a01a22" stroke-width="2.500"/></svg></span><span class="c nm" id="nm11" style="left:520px;letter-spacing:-1.545px;margin-left:0.10px">Chainsaw STIHL</span><a class="c ow" id="ow11" style="left:909px;letter-spacing:-0.693px;margin-left:-2.00px">Kenny Porowski</a><span class="c ph" id="ph11" style="left:909px;letter-spacing:-0.562px;margin-left:-1.00px">+1 (576) 647-8779</span><span class="c wh" id="wh11" style="left:1289px;letter-spacing:-0.869px;margin-left:0.50px">Client &gt; Kenny Porowski</span><span class="c doc" id="doc11a" style="left:1773px;top:16px;letter-spacing:-0.637px;margin-left:0.00px">Ticket <a># C10</a>, Ticket <a># A020</a>, Ticket <a>#</a></span><span class="c doc" id="doc11b" style="left:1773px;top:45px;letter-spacing:-0.722px;margin-left:0.00px"><a>A019</a>, Ticket <a># A012</a></span></div>

<div class="pop"><i class="arrow"></i><svg width="718" height="403" viewBox="808 906 718 403">
<defs>
<linearGradient id="tg" x1="0" y1="0" x2="0" y2="1"><stop offset="0" stop-color="#5a5f64"/><stop offset=".35" stop-color="#45494e"/><stop offset="1" stop-color="#2f3236"/></linearGradient>
<linearGradient id="og" x1="0" y1="0" x2="1" y2="0"><stop offset="0" stop-color="#d9481a"/><stop offset=".3" stop-color="#f0602a"/><stop offset=".65" stop-color="#e04a18"/><stop offset="1" stop-color="#c63e14"/></linearGradient>
<filter id="bl" x="-5%" y="-5%" width="110%" height="110%"><feGaussianBlur stdDeviation=".9"/></filter>
<filter id="bs" x="-20%" y="-100%" width="140%" height="300%"><feGaussianBlur stdDeviation="7"/></filter>
</defs>
<ellipse cx="1335" cy="1284" rx="140" ry="7" fill="#000" opacity=".13" filter="url(#bs)"/>
<ellipse cx="1165" cy="1240" rx="45" ry="4" fill="#000" opacity=".10" filter="url(#bs)"/>
<g filter="url(#bl)">
<path d="M874 1138 Q862 1140 864 1160 Q866 1177 882 1179 L1050 1198 L1150 1201 L1150 1154 L1050 1146 Z" fill="url(#tg)"/>
<path d="M956 1143 L952 1187 M1050 1147 L1046 1198" stroke="#2d3034" stroke-width="2.500" fill="none"/>
<path d="M1147 1153 L1179 1150 L1181 1200 L1147 1200 Z" fill="#565a5f"/>
<path d="M1150 1178 L1181 1168 L1183 1243 L1161 1241 L1150 1205 Z" fill="#5b4e49"/>
<path d="M1213 935 L1237 942 L1234 988 L1227 1010 L1221 1080 L1225 1136 L1238 1192 L1258 1230 L1300 1250 L1440 1245 L1452 1248 L1453 1263 L1440 1277 L1300 1283 L1264 1280 L1231 1272 L1194 1250 L1180 1230 L1179 1174 L1182 1136 L1190 1080 L1188 1040 L1191 988 L1200 960 Z" fill="#3b3d40"/>
<path d="M1203 960 L1212 962 L1204 1000 L1206 1040 L1199 1080 L1196 1040 L1196 1000 Z" fill="#56585b"/>
<path d="M1214.1 936.5 L1250.6 940.8 L1254.9 958.3 L1266.6 984.6 L1257.9 1016.7 L1243.3 1045.8 L1217.0 1051.6 L1217.0 987.5 Z" fill="#343638"/>
<ellipse cx="1266" cy="1122" rx="64" ry="120" fill="#252628"/>
<ellipse cx="1280" cy="1127" rx="62" ry="111" fill="url(#og)"/>
<path d="M1243 1050 C1230 1100 1232 1160 1250 1205" stroke="#f47a3c" stroke-width="5" fill="none" opacity=".7"/>
<path d="M1310 990 L1340 998 L1395 1006 L1443 1020 L1447 1060 L1447 1160 L1441 1187 L1395 1191 L1320 1182 L1300 1100 Z" fill="#e2511d"/>
<path d="M1317 1046 L1376 1046 L1379 1100 L1373 1178 L1320 1178 Z" fill="#1d1d1e"/>
<path d="M1266.6 970.0 L1386.2 972.9 L1378.9 997.7 L1348.3 1002.1 L1295.8 1000.6 L1272.4 993.3 Z" fill="#3f4144"/>
<path d="M1247.7 948.1 L1324.9 959.8 L1396.4 946.7 L1398.4 983.1 L1381.8 992.7 L1324.9 996.8 L1256.4 987.5 L1247.7 972.9 Z" fill="#595b5e"/>
<path d="M1251.4 943.2 L1322.0 929.2 L1390.6 934.4 L1397.0 947.2 L1324.9 960.4 L1249.1 950.2 Z" fill="#797b7e"/>
<path d="M1323.5 929.2 L1338.1 930.0 L1343.0 994.8 L1328.4 996.2 Z" fill="#e2511d"/>
<path d="M1388.5 936.5 L1394.9 940.8 L1399.3 983.1 L1392.0 987.5 Z" fill="#e2511d"/>
<path d="M1258 998 C1262 984 1300 980 1312 988 L1318 1010 C1320 1040 1335 1070 1344 1100 C1346 1122 1320 1132 1290 1129 C1272 1127 1268 1110 1266 1090 C1262 1050 1255 1020 1258 998 Z" fill="#3c3e41"/>
<path d="M1270 1004 C1278 996 1296 996 1302 1002 C1300 1030 1310 1060 1318 1090" stroke="#55585b" stroke-width="6" fill="none" opacity=".8"/>
<rect x="1398" y="1037" width="44" height="50" fill="#b83a12"/><path d="M1402 1043 h36 M1402 1052 h36 M1402 1061 h36 M1402 1070 h36 M1402 1079 h36" stroke="#2a140c" stroke-width="5" stroke-dasharray="9 4"/>
<rect x="1445" y="1037" width="14" height="50" fill="#27282a"/>
<path d="M1366 1084 L1413 1076" stroke="#303133" stroke-width="13" stroke-linecap="round"/><path d="M1387 1088 L1391 1110" stroke="#303133" stroke-width="7"/>
<rect x="1419" y="1113" width="23" height="36" fill="#d6e3f0"/><rect x="1421" y="1122" width="20" height="6" fill="#2c70c2"/>
<rect x="1451" y="1095" width="18" height="62" rx="2" fill="#252527"/><path d="M1448.500 1098 V1156" stroke="#fff" stroke-width="4" stroke-dasharray="4 3"/><rect x="1448" y="1157" width="15" height="24" fill="#56585b"/>
<path d="M1336 1119 C1345 1130 1338 1146 1333 1163" stroke="#a8c62e" stroke-width="3.500" fill="none"/>
<circle cx="1360" cy="1164" r="16" fill="#38393b"/><circle cx="1360" cy="1162" r="7" fill="#4e5053"/>
<path d="M1292 1181 L1298 1176 L1372 1174 L1381 1183 L1391 1199 L1456 1202 L1457 1216 L1450 1247 L1325 1251 L1317 1226 L1299 1210 Z" fill="#f2f3f4" stroke="#dde0e3" stroke-width="1.500"/>
<path d="M1300 1190 L1380 1192 L1388 1210 L1450 1214" stroke="#e3e6e9" stroke-width="6" fill="none"/>
<path d="M1300 1250 L1440 1245 L1452 1248 L1453 1263 L1440 1277 L1300 1283 L1264 1280 L1240 1262 L1262 1240 Z" fill="#3a3c3e"/><path d="M1395 1262 L1412 1252 L1432 1252 L1428 1272 L1392 1276 Z" fill="#232425"/>
<path d="M1215.6 936.5 L1187.9 930.6 L1158.7 935.0 L1135.4 952.5 L1117.9 981.7 L1106.2 1016.7 L1097.5 1051.6 L1091.6 1086.6 L1091.0 1104.1 L1114.4 1104.1 L1116.4 1086.6 L1118.5 1063.3 L1124.3 1034.1 L1133.0 1005.0 L1147.6 976.4 L1164.5 956.0 L1185.0 949.6 L1209.7 953.1 Z" fill="#2a2a2c"/>
<path d="M1091.6 1101.2 L1092.5 1124.6 L1095.1 1136.2 L1103.3 1162.5 L1115.0 1191.6 L1129.5 1220.8 L1139.7 1244.1 L1143.5 1260.2 L1154.6 1258.1 L1150.0 1238.3 L1133.0 1209.1 L1119.6 1180.0 L1109.7 1150.8 L1105.6 1124.6 L1106.2 1101.2 Z" fill="#2a2a2c"/>
<path d="M1132 1200 L1156 1218" stroke="#2a2a2c" stroke-width="13"/>
<circle cx="1153" cy="1231" r="8.500" fill="none" stroke="#b4b4b8" stroke-width="2"/><path d="M1162 1237 L1190 1246" stroke="#c4c4c8" stroke-width="3"/><ellipse cx="1147" cy="1250" rx="4" ry="7" fill="none" stroke="#2a2a2c" stroke-width="2.500" transform="rotate(-20 1147 1250)"/>
</g>
</svg></div>
</body></html>
